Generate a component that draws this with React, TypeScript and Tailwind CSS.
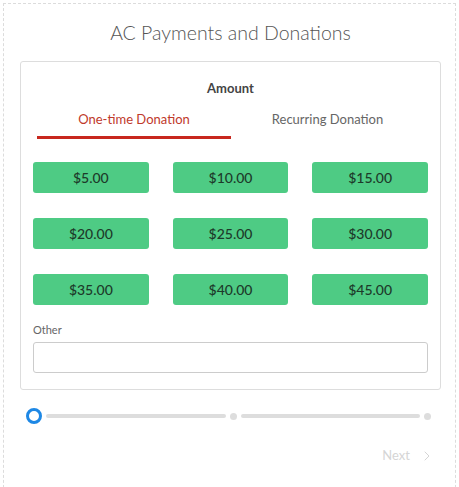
import { ChevronRight } from 'lucide-react';

const amounts = ['$5.00', '$10.00', '$15.00', '$20.00', '$25.00', '$30.00', '$35.00', '$40.00', '$45.00'];

export default function App() {
  return (
    <div className="h-[487px] w-[459px] overflow-hidden bg-white p-[3px] font-['Lato',sans-serif]">
      <div className="h-[500px] border border-dashed border-[#dcdcdc] pl-4 pr-[14px]">
        <h1 className="pt-[16px] text-center text-[19.5px] font-light leading-[26px] text-[#555]">
          AC Payments and Donations
        </h1>

        <div className="mt-[15px] rounded-[3px] border border-[#ddd] px-3 pb-4">
          <h2 className="pt-[16px] text-center text-[13px] font-bold leading-[20px] text-[#444]">Amount</h2>

          <div className="mt-[11px] flex items-start px-1">
            <div className="w-[194px] border-b-[3px] border-[#c8281e] pb-[7px] text-center text-[13px] leading-[20px] text-[#c0392b]">
              One-time Donation
            </div>
            <div className="flex-1 pb-[7px] text-center text-[13px] leading-[20px] text-[#666]">
              Recurring Donation
            </div>
          </div>

          <div className="mt-[23px] grid grid-cols-3 gap-x-[24px] gap-y-[25px]">
            {amounts.map((a) => (
              <button
                key={a}
                className="h-[31px] rounded-[3px] bg-[#4ecb84] text-[14px] font-medium text-[#1d3a2a]"
              >
                {a}
              </button>
            ))}
          </div>

          <label className="mt-[17px] block text-[11px] leading-[16px] text-[#666]">Other</label>
          <input className="mt-[4px] block h-[31px] w-full rounded-[3px] border border-[#ccc] outline-none" />
        </div>

        <div className="mt-[18px] flex items-center gap-[4px] pl-[6px] pr-[10px]">
          <span className="h-[16px] w-[16px] shrink-0 rounded-full border-[3px] border-[#1e88e5] bg-white" />
          <span className="h-[4px] flex-1 rounded-full bg-[#ddd]" />
          <span className="h-[7px] w-[7px] shrink-0 rounded-full bg-[#ddd]" />
          <span className="h-[4px] flex-1 rounded-full bg-[#ddd]" />
          <span className="h-[7px] w-[7px] shrink-0 rounded-full bg-[#ddd]" />
        </div>

        <div className="mt-[22px] flex justify-end pr-[6px]">
          <button className="flex items-center gap-[9px] text-[13px] text-[#d5d5d5]">
            Next
            <ChevronRight size={16} strokeWidth={1.5} />
          </button>
        </div>
      </div>
    </div>
  );
}
